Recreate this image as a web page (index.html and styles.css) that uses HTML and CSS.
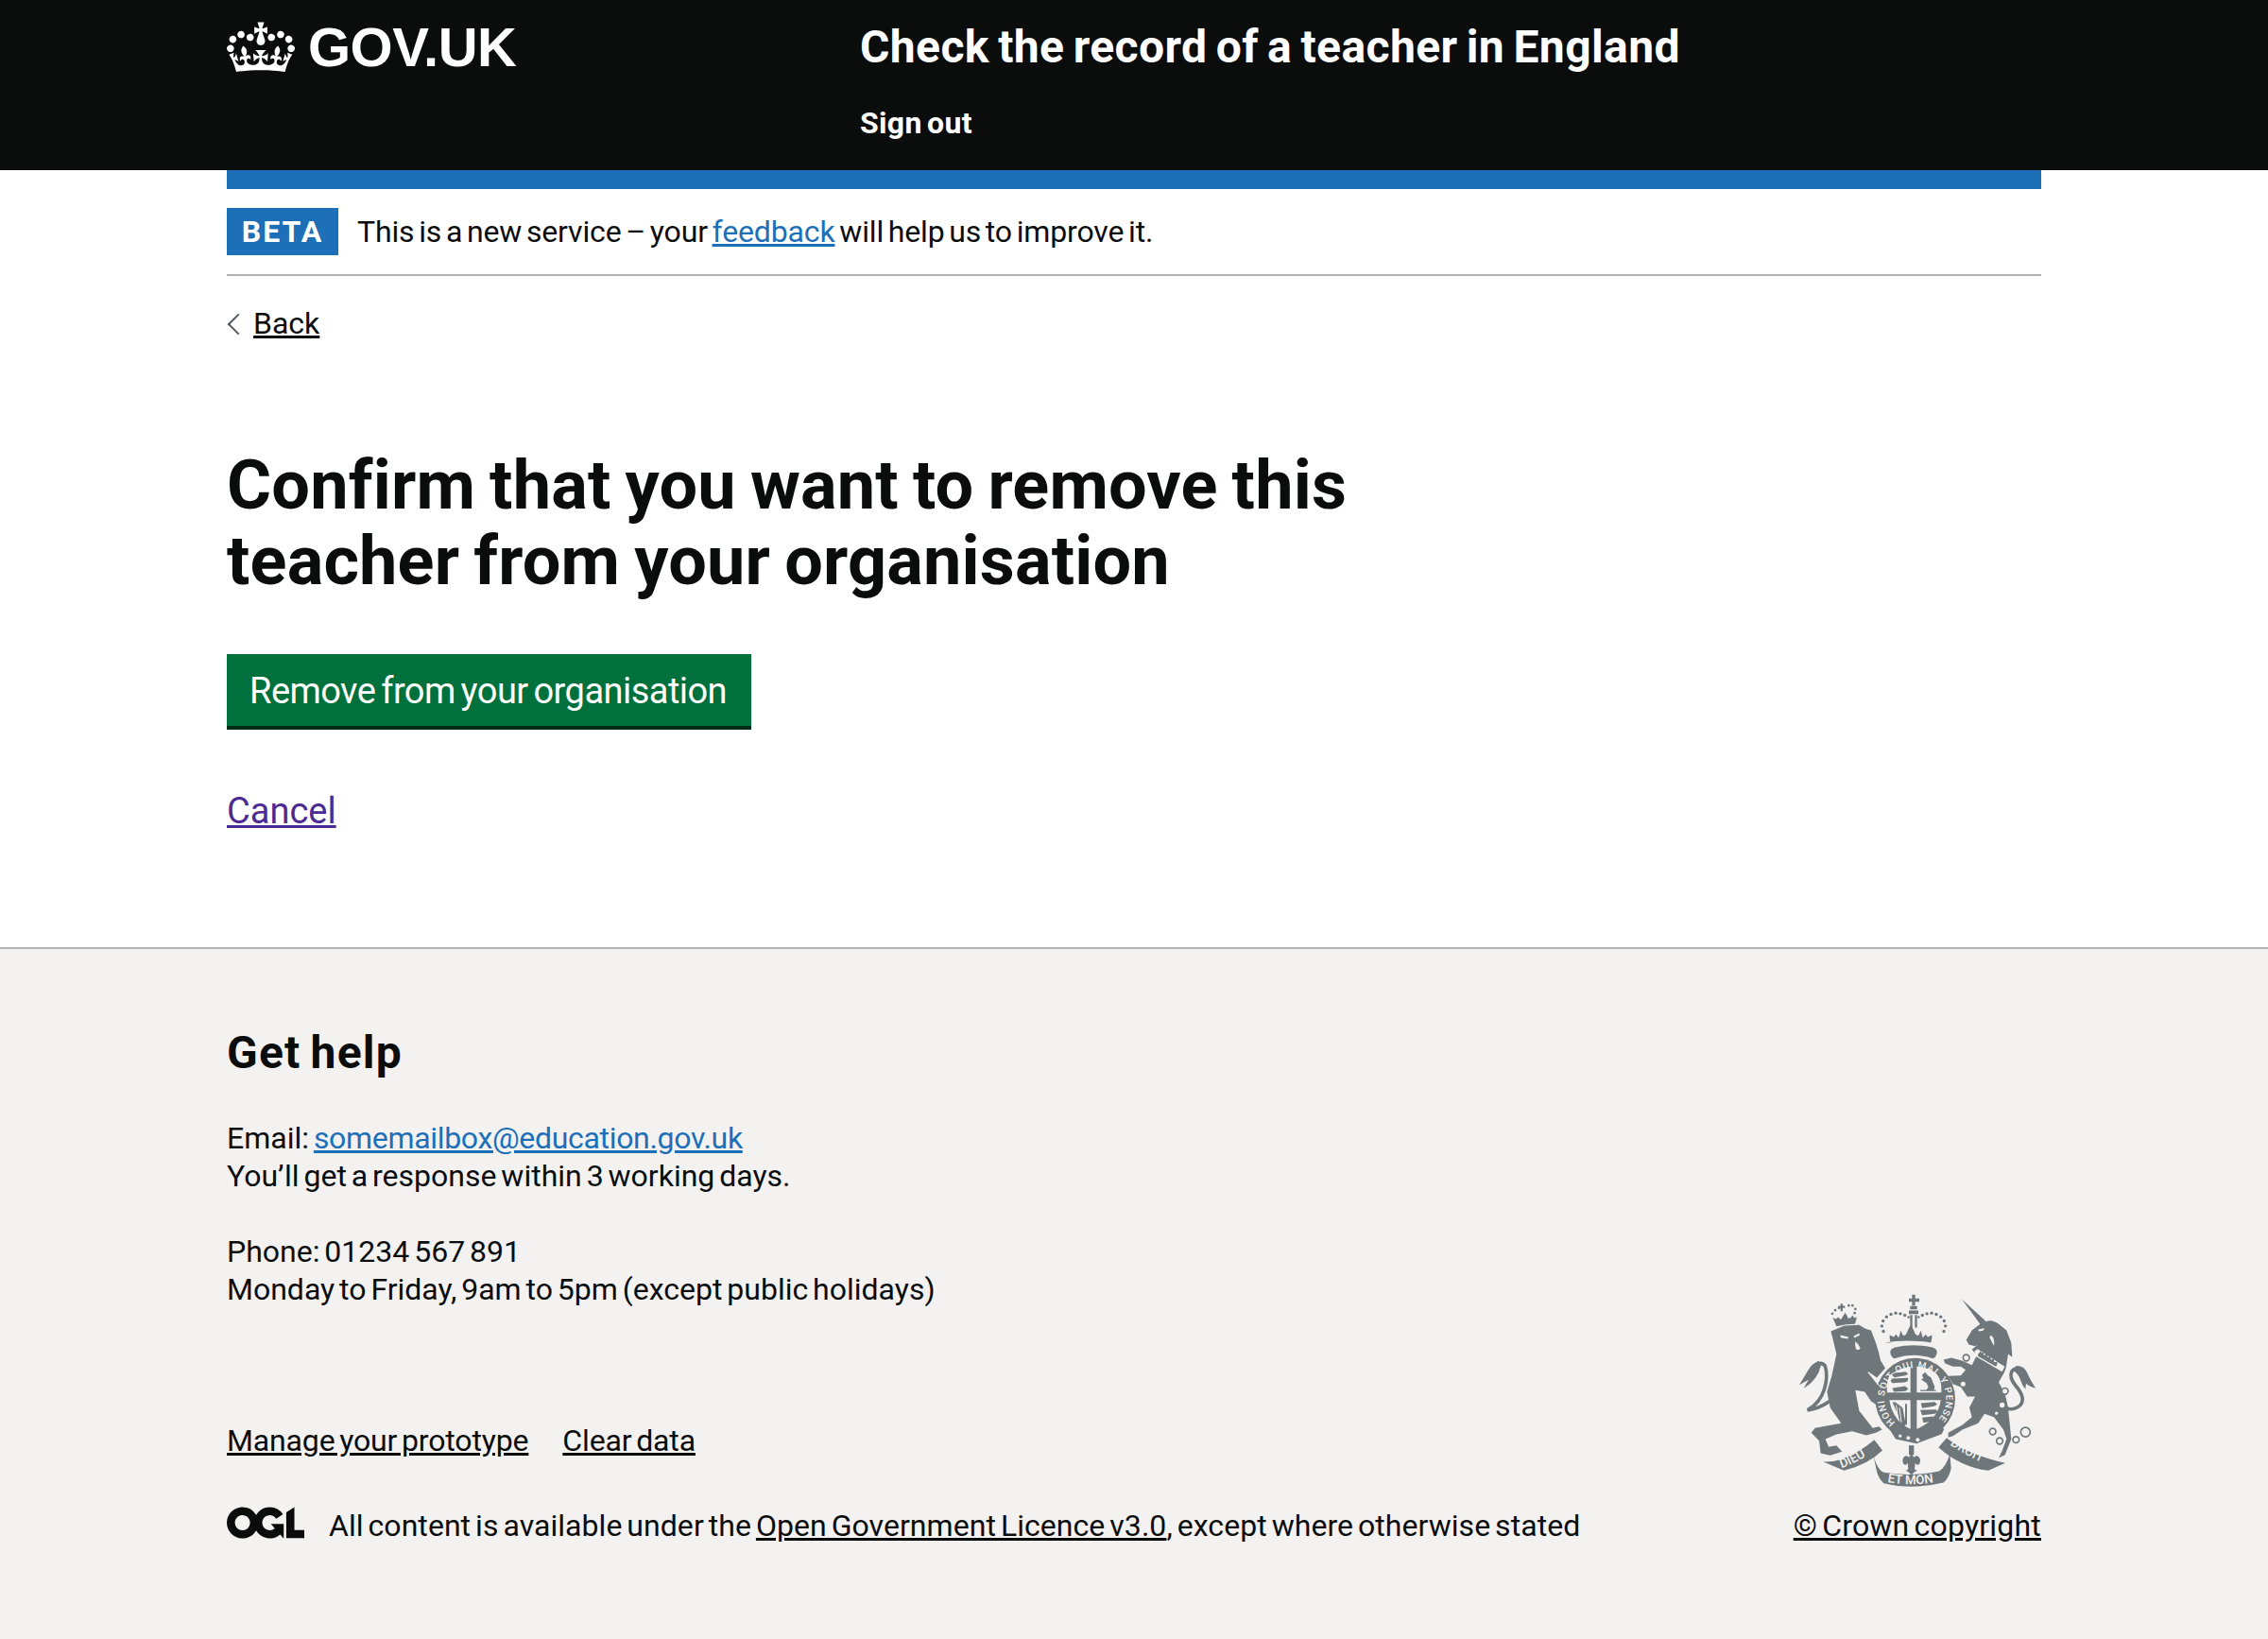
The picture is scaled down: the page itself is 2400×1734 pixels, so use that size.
FILE: index.html
```html
<!DOCTYPE html>
<html lang="en">
<head>
<meta charset="utf-8">
<title>Check the record of a teacher in England</title>
<link rel="stylesheet" href="styles.css">
</head>
<body>
<header class="site-header">
  <div class="container header-inner">
    <a class="logo" href="#">
      <svg class="crown" viewBox="0 0 132 97" width="72" height="60" aria-hidden="true"><path fill="currentColor" fill-rule="evenodd" d="M25 30.2c3.5 1.5 7.7-.2 9.1-3.7 1.5-3.6-.2-7.8-3.9-9.2-3.6-1.4-7.6.3-9.1 3.9-1.4 3.5.3 7.5 3.9 9zM9 39.5c3.6 1.5 7.8-.2 9.2-3.7 1.5-3.6-.2-7.8-3.9-9.1-3.6-1.5-7.6.2-9.1 3.8-1.4 3.5.3 7.5 3.8 9zM4.4 57.2c3.5 1.5 7.7-.2 9.1-3.8 1.5-3.6-.2-7.7-3.9-9.1-3.5-1.5-7.6.3-9.1 3.8-1.4 3.5.3 7.6 3.9 9.1zm38.3-21.4c3.5 1.5 7.7-.2 9.1-3.8 1.5-3.6-.2-7.7-3.9-9.1-3.6-1.5-7.6.3-9.1 3.8-1.3 3.6.4 7.7 3.9 9.1zm64.4-5.6c-3.6 1.5-7.8-.2-9.1-3.7-1.5-3.6.2-7.8 3.8-9.2 3.6-1.4 7.7.3 9.2 3.9 1.3 3.5-.4 7.5-3.9 9zm15.9 9.3c-3.6 1.5-7.7-.2-9.1-3.7-1.5-3.6.2-7.8 3.7-9.1 3.6-1.5 7.7.2 9.2 3.8 1.5 3.5-.3 7.5-3.8 9zm4.7 17.7c-3.6 1.5-7.8-.2-9.2-3.8-1.5-3.6.2-7.7 3.9-9.1 3.6-1.5 7.7.3 9.2 3.8 1.3 3.5-.4 7.6-3.9 9.1zM89.3 35.8c-3.6 1.5-7.8-.2-9.2-3.8-1.4-3.6.2-7.7 3.9-9.1 3.6-1.5 7.7.3 9.2 3.8 1.4 3.6-.3 7.7-3.9 9.1zM69.7 17.7l8.9 4.7V9.3l-8.9 2.8c-.2-.3-.5-.6-.9-.9L72.4 0H59.6l3.5 11.2c-.3.3-.6.5-.9.9l-8.8-2.8v13.1l8.8-4.7c.3.3.6.7.9.9l-5 15.4v.1c-.2.8-.4 1.6-.4 2.4 0 4.1 3.1 7.5 7 8.1h.2c.3 0 .7.1 1 .1.4 0 .7 0 1-.1h.2c4-.6 7.1-4.1 7.1-8.1 0-.8-.1-1.7-.4-2.4V34l-5.1-15.4c.4-.2.7-.6 1-.9zM66 92.8c16.9 0 32.8 1.1 47.1 3.2 4-16.9 8.9-26.7 14-33.5l-9.6-3.4c1 4.9 1.1 7.2 0 10.2-1.5-1.4-3-4.3-4.2-8.7L108.6 76c2.8-2 5-3.2 7.5-3.3-4.4 9.4-10 11.9-13.6 11.2-4.3-.8-6.3-4.6-5.6-7.9 1-4.7 5.7-5.9 8-.5 4.3-8.7-3-11.4-7.6-8.8 7.1-7.2 7.9-13.5 2.1-21.1-8 6.1-8.1 12.3-4.5 20.8-4.7-5.4-12.1-2.5-9.5 6.2 3.4-5.2 7.9-2 7.2 3.1-.6 4.3-6.4 7.8-13.5 7.2-10.3-.9-10.9-8-11.2-13.8 2.5-.5 7.1 1.8 11 7.3L80.2 60c-4.1 4.4-8 5.3-12.3 5.4 1.4-4.4 8-11.6 8-11.6H55.5s6.4 7.2 7.9 11.6c-4.2-.1-8-1-12.3-5.4l1.4 16.4c3.9-5.5 8.5-7.7 10.9-7.3-.3 5.8-.9 12.8-11.1 13.8-7.2.6-12.9-2.9-13.5-7.2-.7-5 3.8-8.3 7.1-3.1 2.7-8.7-4.6-11.6-9.4-6.2 3.7-8.5 3.6-14.7-4.6-20.8-5.8 7.6-5 13.9 2.2 21.1-4.7-2.6-11.9.1-7.7 8.8 2.3-5.5 7.1-4.2 8.1.5.7 3.3-1.3 7.1-5.7 7.9-3.5.7-9-1.8-13.5-11.2 2.5.1 4.7 1.3 7.5 3.3l-4.7-15.4c-1.2 4.4-2.7 7.2-4.3 8.7-1.1-3-.9-5.3 0-10.2l-9.5 3.4c5 6.9 9.9 16.7 14 33.5 14.8-2.1 30.8-3.2 47.7-3.2z"/></svg>
      <span class="logo-text">GOV.UK</span>
    </a>
    <div class="header-content">
      <a class="service-name" href="#">Check the record of a teacher in England</a>
      <a class="sign-out" href="#">Sign out</a>
    </div>
  </div>
</header>

<div class="container">
  <div class="phase-banner">
    <strong class="phase-tag">BETA</strong>
    <span class="phase-text">This is a new service – your <a class="link" href="#">feedback</a> will help us to improve it.</span>
  </div>
  <a class="back-link" href="#">Back</a>
  <main class="main">
    <h1 class="page-title">Confirm that you want to remove this teacher from your organisation</h1>
    <a class="button" href="#">Remove from your organisation</a>
    <p class="cancel"><a href="#">Cancel</a></p>
  </main>
</div>

<footer class="site-footer">
  <div class="container">
    <h2 class="help-title">Get help</h2>
    <p class="help-text">Email: <a class="link email" href="#">somemailbox@education.gov.uk</a><br>You’ll get a response within 3 working days.</p>
    <p class="help-text">Phone: 01234 567 891<br>Monday to Friday, 9am to 5pm (except public holidays)</p>
    <div class="footer-meta">
      <div class="meta-left">
        <ul class="footer-links">
          <li><a href="#">Manage your prototype</a></li>
          <li><a href="#">Clear data</a></li>
        </ul>
        <div class="licence">
          <svg class="ogl" viewBox="0 0 483.2 195.7" width="82" height="34" aria-hidden="true"><path fill="currentColor" d="M421.5 142.8V.1l-50.7 32.3v161.1h112.4v-50.7zm-122.3-9.6A47.12 47.12 0 0 1 221 97.8c0-26 21.1-47.1 47.1-47.1 16.7 0 31.4 8.7 39.7 21.8l42.7-27.2A97.63 97.63 0 0 0 268.1 0c-36.5 0-68.3 20.1-85.1 49.7A98 98 0 0 0 97.8 0C43.9 0 0 43.9 0 97.8s43.9 97.8 97.8 97.8c36.5 0 68.3-20.1 85.1-49.7a97.76 97.76 0 0 0 149.6 25.4l19.4 22.2h3v-87.8h-80l24.3 27.5zM97.8 145c-26 0-47.1-21.1-47.1-47.1s21.1-47.1 47.1-47.1 47.2 21 47.2 47S123.8 145 97.8 145"/></svg>
          <span class="licence-text">All content is available under the <a href="#">Open Government Licence v3.0</a>, except where otherwise stated</span>
        </div>
      </div>
      <div class="meta-right">
        <svg class="arms" viewBox="60 60 780 620" width="260" height="207" aria-hidden="true">
          <defs>
            <path id="garter-ring" d="M377 467 A98 98 0 1 1 503 467"/>
            <path id="scroll-left" d="M206 612 Q262 592 316 552"/>
            <path id="scroll-mid" d="M348 656 Q435 672 528 652"/>
            <path id="scroll-right" d="M550 538 Q610 578 684 608"/>
          </defs>
          <g class="arms-fill">
            <!-- royal crown -->
            <path d="M430 62h10v12h13v10h-13v12h-10v-12h-10v-10h10z"/>
            <path d="M424 98h22v10h-22zM420 112h30v11h-30zM424 126h7v40h-7zM439 126h7v40h-7z"/>
            <path d="M362 214q-4-12-3-24l13 6 7-8 9 10 6-22 8 16 9-4 8-18 7-12 7 12 8 18 9 4 8-16 6 22 9-10 7 8 13-6q1 12-3 24q-76-12-148 0z"/>
            <path d="M361 246q-1-12 14-17q60-14 120 0q15 5 14 17q-2 14-13 18q-60-20-122 0q-11-4-13-18z"/>
            <circle cx="339" cy="178" r="5"/><circle cx="334" cy="161" r="5"/><circle cx="338" cy="145" r="5"/><circle cx="349" cy="132" r="5"/><circle cx="363" cy="124" r="5"/><circle cx="378" cy="120" r="5"/><circle cx="393" cy="122" r="5"/><circle cx="407" cy="127" r="5"/><circle cx="419" cy="133" r="4"/>
            <circle cx="451" cy="133" r="4"/><circle cx="463" cy="127" r="5"/><circle cx="477" cy="122" r="5"/><circle cx="492" cy="120" r="5"/><circle cx="507" cy="124" r="5"/><circle cx="521" cy="132" r="5"/><circle cx="532" cy="145" r="5"/><circle cx="536" cy="161" r="5"/><circle cx="531" cy="178" r="5"/>
            <!-- lion's crown -->
            <path d="M190 162l-12-28 10 5 8-6 8 8 7-12 6-10 6 8 4 10 8-2 6-8 6 8 8-2-6 22q-28 0-59 7z"/>
            <circle cx="177" cy="122" r="4"/><circle cx="186" cy="111" r="4"/><circle cx="198" cy="104" r="4"/><circle cx="229" cy="96" r="4"/><circle cx="241" cy="96" r="4"/><circle cx="250" cy="107" r="4"/><circle cx="248" cy="120" r="4"/>
            <path d="M203 90h7v7h7v7h-7v10h-7v-10h-7v-7h7z"/>
            <!-- lion body -->
            <path d="M172 178L215 160 262 158 282 170 300 175 308 196 315 215 324 244 330 270 345 295 318 325 290 305 340 375 345 415 330 420 300 400 280 370 250 365 262 430 305 485 325 480 335 490 315 500 285 508 240 495 190 505 155 520 165 545 190 540 208 560 170 572 140 565 135 525 110 500 122 485 205 470 170 420 160 370 175 320 190 250 178 200z"/>
            <!-- lion tail -->
            <path class="tail" d="M168 400q-34 24-70 28 40-22 54-68 12-40 2-72q-8-12-22-6"/>
            <path d="M134 272q-22 8-34 30-12 20-28 46 18-10 30-16-8 12-16 26 22-12 38-34 12-16 14-30 6-8-4-22z"/>
            <!-- shield roundel -->
            <ellipse cx="440" cy="392" rx="127" ry="129"/>
            <!-- garter buckle -->
            <path d="M358 488l24-18 60 34 74-22 16 6-8 16-80 30-66-14z"/>
            <!-- unicorn -->
            <path d="M588 76L664 146 648 158z"/>
            <path d="M650 152Q680 135 705 155L730 175 745 215 748 260 735 250 728 295 722 310 705 340 725 375 735 420 740 470 745 520 725 570 705 580 715 560 730 520 720 490 690 450 660 440 640 470 590 490 560 510 545 515 545 500 590 475 620 450 612 420 630 385 605 385 585 355 560 345 545 320 585 318 600 300 585 290 560 290 535 280 530 268 555 262 590 272 620 285 635 255 620 235 640 220 630 225 610 220 602 205 620 175z"/>
            <!-- unicorn tail -->
            <path class="tail" d="M716 418q34 16 58-6 18-22-14-60-22-26-14-46 10-14 30-8"/>
            <path d="M760 288q24-2 36 22 8 20 26 48-20-4-30-14l-2 18q-12-14-16-30-6-18-18-26-6-10 4-18z"/>
          </g>
          <!-- unicorn collar -->
          <path class="panel" d="M628 242l10-8 86 56-8 16-86-50z"/>
          <path class="arms-fill" d="M640 250l8-10 3 8 6-4 0 10 12-4 1 10 9-2 1 10 10-2 0 10 11-1-2 12-4 2-56-32z"/>
          <!-- face highlights -->
          <path class="panel" d="M202 190l26 6-2 6-22-4zM262 184l-18 10 4 4 16-8zM250 210q12 8 16 22-6 8-14 2-4-12-2-24zM640 172l20-4-4 8-14 2zM680 190q14 10 10 34-10-20-14-26z"/>
          <path class="hairline" d="M290 308l42 50"/>
          <!-- shield quarters -->
          <path class="panel" d="M351 372q-4-52 18-62 28-16 56-20v82zM445 290q40 4 62 22 18 18 16 60h-78zM358 396h67v92q-56-26-67-92zM445 396h76q-8 62-76 92z"/>
          <g class="arms-fill">
            <path d="M366 316l8-6 36-4 8 8-10 4-34 6zM362 336l4-8 52-2-2 10-10 4-38 2zM368 358l40-6 10 8-8 8-38 2z"/>
            <path d="M462 316l10-8 8 10 10 6 12 30-4 14-12-2-14 2 10-12-6-14-18-12 8-2zM456 364h50v4h-50z"/>
            <path d="M368 404l8-2 24 18 10 54-8 6-10-14-8-26zM408 408h6v66h-6z"/>
            <path d="M458 406l44-4 8 8-10 6-38 6zM456 428l50-2 6 8-10 6-40 4zM462 452l36-4 6 8-12 8-26 4z"/>
          </g>
          <path class="hairline" d="M380 412l6 48M390 420l6 46"/>
          <circle class="panel" cx="392" cy="510" r="5"/><circle class="panel" cx="418" cy="516" r="6"/><circle class="panel" cx="448" cy="522" r="6"/>
          <!-- motto ribbon -->
          <g class="arms-fill">
            <path d="M148 592q28 2 60-8 62-26 102-62l26 34q-48 46-122 64z"/>
            <path d="M514 546l26-30q62 52 186 80l-54 24q-90-12-158-74z"/>
            <path d="M308 574q12 44 32 52 92 14 176-4 20-12 34-54l4 44q-6 30-24 46-100 24-190 2-18-14-24-46z"/>
            <path d="M420 540h16v30h-16z"/>
            <path d="M428 566l8 12q4-6 12-4 12 8 6 24-8 8-14-2l-2 20 8 4-10 6-8 8-8-8-10-6 8-4-2-20q-6 10-14 2-6-16 6-24 8-2 12 4z"/>
          </g>
          <g class="chain">
            <circle cx="790" cy="498" r="15"/><circle cx="760" cy="522" r="10"/><circle cx="686" cy="496" r="10"/><circle cx="708" cy="526" r="10"/><circle cx="602" cy="262" r="10"/><circle cx="592" cy="345" r="10"/><circle cx="725" cy="368" r="10"/>
          </g>
          <circle class="panel" cx="716" cy="412" r="8"/><circle class="panel" cx="698" cy="438" r="5"/>
          <text class="arms-text garter-text"><textPath href="#garter-ring" textLength="462" lengthAdjust="spacing">HONI SOIT QUI MAL Y PENSE</textPath></text>
          <text class="arms-text"><textPath href="#scroll-left">DIEU</textPath></text>
          <text class="arms-text"><textPath href="#scroll-mid" startOffset="2%">ET MON</textPath></text>
          <text class="arms-text"><textPath href="#scroll-right">DROIT</textPath></text>
        </svg>
        <a class="copyright" href="#">© Crown copyright</a>
      </div>
    </div>
  </div>
</footer>
</body>
</html>
```

FILE: styles.css
```css
* { box-sizing: border-box; }
html, body { margin: 0; padding: 0; }
body {
  font-family: Roboto, "Noto Sans", sans-serif;
  color: #0b0c0c;
  background: #fff;
  font-size: 38px;
  line-height: 50px;
  word-spacing: -0.08em;
}
a { color: inherit; }
.container { width: 1920px; margin: 0 auto; }

/* Header */
.site-header { background: #0b0c0c; color: #fff; height: 180px; }
.header-inner { display: flex; }
.logo { width: 670px; display: flex; align-items: flex-start; gap: 14px; padding-top: 20px; color: #fff; text-decoration: none; }
.crown { display: block; flex: none; }
.logo-text { font-family: "Liberation Sans", sans-serif; font-weight: 700; font-size: 58px; line-height: 60px; letter-spacing: -0.5px; }
.header-content { display: flex; flex-direction: column; align-items: flex-start; }
.service-name { font-weight: 700; font-size: 48px; line-height: 50px; margin-top: 25px; text-decoration: none; color: #fff; letter-spacing: 0.4px; }
.sign-out { font-weight: 700; font-size: 32px; line-height: 40px; margin-top: 35px; text-decoration: none; color: #fff; letter-spacing: 0.35px; }

/* Phase banner */
.phase-banner { border-top: 20px solid #1d70b8; border-bottom: 2px solid #b1b4b6; height: 112px; padding-top: 20px; display: flex; align-items: flex-start; gap: 20px; font-size: 32px; line-height: 50px; }
.phase-tag { background: #1d70b8; color: #fff; font-size: 32px; font-weight: 700; letter-spacing: 2px; line-height: 50px; height: 50px; width: 118px; text-align: center; }
.phase-text { letter-spacing: -0.15px; }
.link { color: #1d70b8; }

/* Back link */
.back-link { display: block; width: fit-content; position: relative; margin-top: 30px; padding-left: 28px; font-size: 32px; line-height: 40px; }
.back-link::before { content: ""; position: absolute; left: 4px; top: 13px; width: 14px; height: 14px; border-left: 2px solid #505a5f; border-bottom: 2px solid #505a5f; transform: rotate(45deg); }

/* Main */
.main { padding-top: 112px; padding-bottom: 119px; }
.page-title { margin: 0 0 58px; font-size: 72px; line-height: 80px; font-weight: 700; width: 1260px; letter-spacing: 0.2px; }
.button { display: block; width: fit-content; background: #00703c; color: #fff; text-decoration: none; font-size: 38px; line-height: 50px; padding: 14px 26px 12px 24px; letter-spacing: -0.54px; box-shadow: 0 4px 0 #002d18; }
.cancel { margin: 65px 0 0; }
.cancel a { color: #4c2c92; }

/* Footer */
.site-footer { background: #f3f2f1; border-top: 2px solid #b1b4b6; padding-top: 80px; height: 732px; font-size: 32px; line-height: 40px; }
.help-title { margin: 0 0 40px; font-size: 48px; line-height: 60px; font-weight: 700; letter-spacing: 1.2px; }
.help-text { margin: 0 0 40px; }
.email { letter-spacing: -0.32px; }
.footer-meta { display: flex; justify-content: space-between; align-items: flex-end; margin-top: -55px; }
.footer-links { list-style: none; margin: 0 0 50px; padding: 0; display: flex; gap: 36px; letter-spacing: -0.15px; }
.licence { display: flex; align-items: center; gap: 26px; }
.licence-text { letter-spacing: 0.05px; }
.ogl { display: block; color: #0b0c0c; margin-top: -6px; }
.meta-right { display: flex; flex-direction: column; align-items: flex-end; }
.copyright { letter-spacing: 0.2px; }
.arms { display: block; margin-bottom: 18px; }
.arms-fill { fill: #6f777b; }
.tail { fill: none; stroke: #6f777b; stroke-width: 11; }
.panel { fill: #f3f2f1; }
.hairline { fill: none; stroke: #f3f2f1; stroke-width: 3; }
.chain circle { fill: #f3f2f1; stroke: #6f777b; stroke-width: 5; }
.arms-text { font-family: Roboto, sans-serif; font-size: 40px; font-weight: 500; word-spacing: 0; fill: #f3f2f1; }
.garter-text { font-size: 30px; }
```
